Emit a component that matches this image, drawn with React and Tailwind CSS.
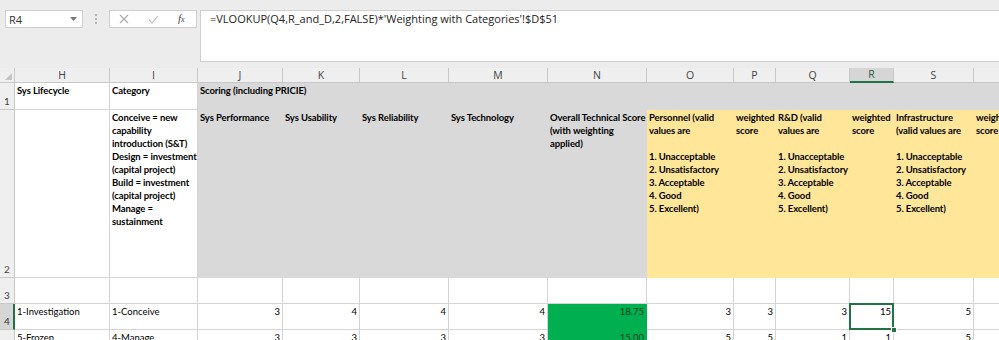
import React from 'react';

const cols = ['H', 'I', 'J', 'K', 'L', 'M', 'N', 'O', 'P', 'Q', 'R', 'S', 'T'];

const line = 'border-r border-b border-[#d4d4d4]';

const Lines = ({ rows }) => (
  <div>
    {rows.map((t, i) => (
      <div key={i} className="whitespace-nowrap">
        {t || '\u00a0'}
      </div>
    ))}
  </div>
);

const RowHead = ({ n, active }) => (
  <div
    className={
      active
        ? 'flex items-end pl-[4px] pb-[1px] bg-[#d6d6d6] border-r-2 border-r-[#217346] border-b border-b-[#c8c8c8] text-[10px] text-[#333]'
        : 'flex items-end pl-[4px] pb-[1px] bg-[#efefef] border-r border-b border-[#c8c8c8] text-[10px] text-[#444]'
    }
  >
    {n}
  </div>
);

const Num = ({ v }) => <div className={`${line} text-right pr-[2px] pt-px overflow-hidden`}>{v}</div>;
const Txt = ({ v }) => <div className={`${line} pl-[2px] pt-px overflow-hidden whitespace-nowrap`}>{v}</div>;

const ratingLines = ['', '1. Unacceptable', '2. Unsatisfactory', '3. Acceptable', '4. Good', '5. Excellent)'];

const DataRow = ({ n, active, row, selected }) => (
  <>
    <RowHead n={n} active={active} />
    <Txt v={row[0]} />
    <Txt v={row[1]} />
    <Num v={row[2]} />
    <Num v={row[3]} />
    <Num v={row[4]} />
    <Num v={row[5]} />
    <div className="bg-[#00b050] border-r border-b border-[#00b050] text-right pr-[2px] pt-px text-[#0f3d17]">{row[6]}</div>
    <Num v={row[7]} />
    <Num v={row[8]} />
    <Num v={row[9]} />
    {selected ? (
      <div className={`${line} relative text-right pr-[2px] pt-px`}>
        {row[10]}
        <div className="absolute -left-[1px] -top-[1px] -right-[1px] -bottom-[1px] border-2 border-[#217346]" />
        <div className="absolute -right-[4px] -bottom-[4px] w-[6px] h-[6px] bg-[#217346] border border-white" />
      </div>
    ) : (
      <Num v={row[10]} />
    )}
    <Num v={row[11]} />
    <Num v={row[12]} />
  </>
);

export default function App() {
  return (
    <div className="w-[999px] h-[340px] overflow-hidden bg-white font-['Lato','Liberation_Sans',sans-serif] text-[9.5px] leading-[13px] text-black">
      {/* formula bar */}
      <div className="h-[68px] bg-[#ececec] flex items-start pl-[5px] pt-[10px] font-['Open_Sans','Liberation_Sans',sans-serif]">
        <div className="w-[78px] h-[18px] bg-white border border-[#cfcfcf] flex items-center justify-between pl-[3px] pr-[5px] text-[11px] text-[#333]">
          <span>R4</span>
          <svg width="7" height="4" viewBox="0 0 7 4"><path d="M0 0h7L3.5 4z" fill="#777" /></svg>
        </div>
        <div className="w-[26px] h-[18px] flex flex-col items-center justify-center gap-[2px]">
          <div className="w-[2px] h-[2px] bg-[#b5b5b5]" />
          <div className="w-[2px] h-[2px] bg-[#b5b5b5]" />
          <div className="w-[2px] h-[2px] bg-[#b5b5b5]" />
        </div>
        <div className="w-[88px] h-[18px] bg-white border border-[#cfcfcf] flex items-center pl-[9px]">
          <svg width="10" height="10" viewBox="0 0 10 10"><path d="M1 1l8 8M9 1l-8 8" stroke="#a8a8a8" strokeWidth="1.1" /></svg>
          <svg className="ml-[19px]" width="11" height="9" viewBox="0 0 11 9"><path d="M1 4.5l3 3.5L10 1" stroke="#b8b8b8" strokeWidth="1.1" fill="none" /></svg>
          <span className="ml-[19px] italic text-[11px] text-[#444] font-['Liberation_Serif',serif]">
            f<span className="text-[8px]">x</span>
          </span>
        </div>
        <div className="ml-[3px] flex-1 h-[52px] bg-white border-y border-l border-[#cfcfcf] pl-[9px] pt-[1px] text-[11px] text-[#222]">
          =VLOOKUP(Q4,R_and_D,2,FALSE)*'Weighting with Categories'!$D$51
        </div>
      </div>

      {/* sheet */}
      <div className="grid grid-cols-[15px_95px_88px_85px_77px_89px_99px_99px_87px_42px_74px_44px_80px_80px] grid-rows-[15px_27px_168px_26px_26px_26px]">
        {/* column header */}
        <div className="bg-[#efefef] border-r border-b border-[#c8c8c8] flex items-end justify-end pr-[2px] pb-[2px]">
          <svg width="7" height="7" viewBox="0 0 7 7"><path d="M7 0v7H0z" fill="#c4c4c4" /></svg>
        </div>
        {cols.map((c) => (
          <div
            key={c}
            className={
              c === 'R'
                ? 'bg-[#d6d6d6] border-r border-[#c8c8c8] border-b-2 border-b-[#217346] flex items-center justify-center text-[10.5px] text-[#2f5e3f] font-["Open_Sans",sans-serif]'
                : 'bg-[#efefef] border-r border-b border-[#c8c8c8] flex items-center justify-center text-[10.5px] text-[#444] font-["Open_Sans",sans-serif]'
            }
          >
            {c}
          </div>
        ))}

        {/* row 1 */}
        <RowHead n="1" />
        <div className={`${line} pl-[2px] pt-px font-bold tracking-[-0.1px]`}>Sys Lifecycle</div>
        <div className={`${line} pl-[2px] pt-px font-bold tracking-[-0.1px]`}>Category</div>
        <div className="col-span-11 bg-[#d9d9d9] border-b border-[#d9d9d9] pl-[2px] pt-px font-bold tracking-[-0.1px]">
          Scoring (including PRICIE)
        </div>

        {/* row 2 */}
        <RowHead n="2" />
        <div className={line} />
        <div className={`${line} pl-[2px] pt-px font-bold tracking-[-0.1px]`}>
          <Lines
            rows={[
              'Conceive = new',
              'capability',
              'introduction (S&T)',
              'Design = investment',
              '(capital project)',
              'Build = investment',
              '(capital project)',
              'Manage =',
              'sustainment',
            ]}
          />
        </div>
        <div className="bg-[#d9d9d9] pl-[2px] pt-px font-bold tracking-[-0.1px]">Sys Performance</div>
        <div className="bg-[#d9d9d9] pl-[2px] pt-px font-bold tracking-[-0.1px]">Sys Usability</div>
        <div className="bg-[#d9d9d9] pl-[2px] pt-px font-bold tracking-[-0.1px]">Sys Reliability</div>
        <div className="bg-[#d9d9d9] pl-[2px] pt-px font-bold tracking-[-0.1px]">Sys Technology</div>
        <div className="bg-[#d9d9d9] pl-[2px] pt-px font-bold tracking-[-0.1px]">
          <Lines rows={['Overall Technical Score', '(with weighting', 'applied)']} />
        </div>
        <div className="bg-[#ffe699] pl-[2px] pt-px font-bold tracking-[-0.1px] overflow-hidden">
          <Lines rows={['Personnel (valid', 'values are', ...ratingLines]} />
        </div>
        <div className="bg-[#ffe699] pl-[2px] pt-px font-bold tracking-[-0.1px] overflow-hidden">
          <Lines rows={['weighted', 'score']} />
        </div>
        <div className="bg-[#ffe699] pl-[2px] pt-px font-bold tracking-[-0.1px] overflow-hidden">
          <Lines rows={['R&D (valid', 'values are', ...ratingLines]} />
        </div>
        <div className="bg-[#ffe699] pl-[2px] pt-px font-bold tracking-[-0.1px] overflow-hidden">
          <Lines rows={['weighted', 'score']} />
        </div>
        <div className="bg-[#ffe699] pl-[2px] pt-px font-bold tracking-[-0.1px] overflow-hidden">
          <Lines rows={['Infrastructure', '(valid values are', ...ratingLines]} />
        </div>
        <div className="bg-[#ffe699] pl-[2px] pt-px font-bold tracking-[-0.1px] overflow-hidden">
          <Lines rows={['weighted', 'score']} />
        </div>

        {/* row 3 */}
        <RowHead n="3" />
        {cols.map((c) => (
          <div key={c} className={line} />
        ))}

        <DataRow n="4" active selected row={['1-Investigation', '1-Conceive', 3, 4, 4, 4, '18.75', 3, 3, 3, 15, 5, '']} />
        <DataRow n="5" row={['5-Frozen', '4-Manage', 3, 3, 3, 3, '15.00', 5, 5, 1, 1, 5, '']} />
      </div>
    </div>
  );
}
